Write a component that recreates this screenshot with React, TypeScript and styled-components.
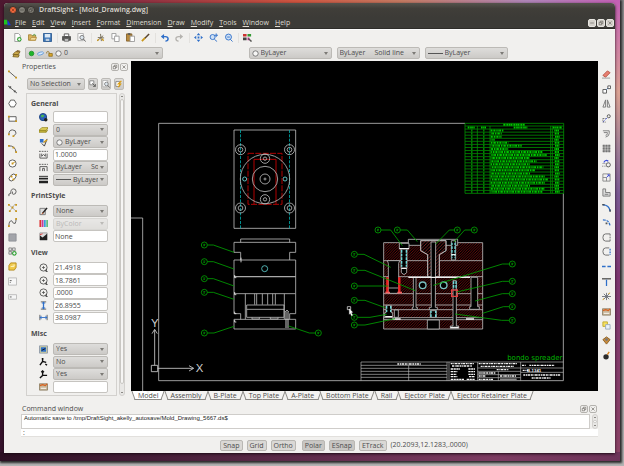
import React from "react";
import styled, { createGlobalStyle, css } from "styled-components";

const Global = createGlobalStyle`
  * { box-sizing: border-box; }
  body { margin: 0; background: #b9b9b9; }
  body, button, input, select, textarea {
    font-family: "Open Sans", "Noto Sans", sans-serif;
    font-size: 7px;
    line-height: 10px;
    color: #4c4c4c;
  }
  button, input, select, textarea { margin: 0; padding: 0; border: 0; background: none; outline: none; }
`;

/* ---------- window frame ---------- */

const Screen = styled.div`
  min-height: 100vh;
  display: flex;
  padding: 0 4px 5px 0;
  background: linear-gradient(#8a8a8a, #b4b4b4);
`;
const Desktop = styled.div`
  flex: 1;
  min-width: 0;
  display: flex;
  padding: 3px 5px 8px 4px;
  box-shadow: 1px 1px 2px 1px #2b2b2b;
  background:
    linear-gradient(90deg, #2d1024, #5a2a48 45%, #7d3c62 80%, #6d3359) 0 100% / 100% 9px no-repeat,
    linear-gradient(#c35fb4, #dba394 20%, #a18097 32%, #7b5a94 42%, #7d3670 60%, #8a4264) 100% 0 / 6px 100% no-repeat,
    linear-gradient(90deg, #4d1830, #8c2f42 22%, #cf5540 48%, #c27a62 65%, #ae85b8 85%, #c35fb4) 0 0 / 100% 8px no-repeat,
    linear-gradient(#4d1830, #59203d 45%, #34122b);
`;
const Frame = styled.div`
  flex: 1;
  min-width: 0;
  display: flex;
  flex-direction: column;
  background: #f1f0ee;
  border-radius: 4px 4px 0 0;
  box-shadow: 0 1px 3px #1a0a14;
  overflow: hidden;
`;
const TitleBar = styled.header`
  height: 14px;
  display: flex;
  align-items: center;
  padding: 0 5px;
  gap: 1px;
  background: linear-gradient(#55534d, #403e39 40%, #3c3b37);
`;
const WinDot = styled.button<{ $close?: boolean }>`
  width: 8px;
  height: 8px;
  display: flex;
  align-items: center;
  justify-content: center;
  border-radius: 50%;
  border: 1px solid #302f2b;
  color: ${(p) => (p.$close ? "#7a2a10" : "#45433e")};
  background: ${(p) => (p.$close ? "#f0683c" : "#85837b")};
  svg { width: 6px; height: 6px; }
`;
const Title = styled.h1`
  margin: 0 0 0 3px;
  font-size: 7px;
  line-height: 12px;
  font-weight: 600;
  color: #dfdbd2;
`;
const MenuBar = styled.nav`
  height: 12px;
  display: flex;
  align-items: center;
  padding: 0 1px 0 0;
  background: #3c3b37;
  border-bottom: 1px solid #2e2d2a;
`;
const MenuItem = styled.button`
  margin-left: 2px;
  padding: 0 2px;
  color: #dfdbd2;
  &::first-letter { text-decoration: underline; }
`;
const Spacer = styled.span`
  flex: 1;
`;
const SmallButton = styled.button<{ $light?: boolean }>`
  width: 8px;
  height: 8px;
  display: flex;
  margin-left: 1px;
  border-radius: 2px;
  border: 1px solid ${(p) => (p.$light ? "#e8e6e1" : "#b4b2ae")};
  background: ${(p) => (p.$light ? "#d3d0ca" : "#f1f0ee")};
  color: #5f5d58;
  svg { width: 6px; height: 6px; }
`;

/* ---------- toolbars ---------- */

const ToolBar = styled.div`
  height: 16px;
  display: flex;
  align-items: center;
  padding-left: 6px;
  border-top: 1px solid #fbfbfa;
`;
const Tool = styled.button`
  width: 15px;
  height: 14px;
  display: flex;
  align-items: center;
  justify-content: center;
  svg { width: 9px; height: 9px; }
`;
const Divider = styled.span`
  width: 1px;
  height: 10px;
  margin: 0 1px 0 2px;
  background: #e3e1de;
`;
const LayerBar = styled.div`
  height: 16px;
  display: flex;
  align-items: center;
  padding: 0 27px 0 5px;
  gap: 5px;
`;
const LayerTool = styled(Tool)`
  margin-right: -4px;
`;
const comboLook = css`
  border: 1px solid #bcbab6;
  border-radius: 2px;
  background: linear-gradient(#dedddb, #cccac7);
`;
const ComboBox = styled.span<{ $w?: number; $off?: boolean }>`
  ${comboLook}
  height: 12px;
  display: flex;
  align-items: center;
  gap: 2px;
  padding: 0 3px 0 2px;
  ${(p) => (p.$w ? `flex: 0 1 ${p.$w}px;` : "flex: 1;")}
  min-width: 0;
  opacity: ${(p) => (p.$off ? 0.45 : 1)};
  svg { width: 7px; height: 7px; flex: none; }
`;
const Select = styled.select`
  appearance: none;
  flex: 1;
  min-width: 0;
  height: 10px;
  overflow: hidden;
  white-space: pre;
`;
const Arrow = styled.i`
  flex: none;
  border: 2px solid transparent;
  border-top: 3px solid #7c7a76;
  border-bottom: 0;
`;

/* ---------- body ---------- */

const Main = styled.div`
  flex: 1;
  display: grid;
  grid-template-columns: 17px minmax(0, 1fr) 17px;
`;
const ToolColumn = styled.div`
  display: grid;
  grid-template-rows: repeat(25, 1fr);
  justify-items: center;
  padding-top: 6px;
  svg { width: 9px; height: 9px; }
`;
const ColumnTool = styled.button`
  display: flex;
  align-items: center;
`;
const Center = styled.div`
  display: flex;
  flex-direction: column;
  min-width: 0;
`;
const Work = styled.div`
  flex: 1;
  display: flex;
`;
const Properties = styled.section`
  width: 110px;
  flex: none;
  display: flex;
  flex-direction: column;
  padding: 0 3px 5px 1px;
`;
const PaneHead = styled.div`
  height: 12px;
  display: flex;
  align-items: center;
`;
const PaneTitle = styled.h2`
  margin: 0;
  font-size: 7px;
  line-height: 10px;
  font-weight: 400;
`;
const SelectionRow = styled.div`
  display: flex;
  gap: 3px;
  margin: 5px 4px 3px 5px;
`;
const SquareButton = styled.button`
  ${comboLook}
  width: 10px;
  height: 12px;
  display: flex;
  align-items: center;
  justify-content: center;
  svg { width: 8px; height: 8px; }
`;
const ListArea = styled.div`
  flex: 1;
  display: flex;
  gap: 2px;
  margin: 0 3px 0 4px;
`;
const PropertyList = styled.div`
  flex: 1;
  min-width: 0;
  display: flex;
  flex-direction: column;
  padding: 0 8px 2px 4px;
  border: 1px solid #d3d1ce;
`;
const GroupTitle = styled.h3`
  height: 19px;
  margin: 0;
  font-size: 7px;
  line-height: 20px;
  font-weight: 700;
  &:first-child { height: 17px; }
`;
const PropertyRow = styled.label`
  flex: 1;
  min-height: 12px;
  display: flex;
  align-items: center;
  padding-left: 8px;
  > svg { width: 9px; height: 9px; flex: none; margin-right: 5px; }
`;
const Field = styled.input`
  flex: 1;
  min-width: 0;
  height: 12px;
  padding: 0 1px;
  border: 1px solid #c6c4c0;
  border-radius: 2px;
  background: #fff;
`;
const ScrollBar = styled.div`
  width: 6px;
  display: flex;
  flex-direction: column;
  border: 1px solid #d3d1ce;
  border-radius: 3px;
  background: #e8e7e5;
`;
const ScrollEnd = styled.span`
  height: 5px;
  flex: none;
  display: flex;
  align-items: center;
  justify-content: center;
  &::before { content: ""; width: 2px; height: 1px; background: #8a8884; }
`;
const Thumb = styled.span<{ $gap: number }>`
  flex: 1;
  margin-bottom: ${(p) => p.$gap}px;
  border: 1px solid #c9c7c3;
  border-radius: 3px;
  background: #f6f5f4;
`;
const DrawingPane = styled.section`
  flex: 1;
  min-width: 0;
  display: flex;
  flex-direction: column;
`;
const Canvas = styled.svg`
  display: block;
  flex: 1 1 0;
  min-height: 0;
  width: 100%;
  background: #000;
`;
const Tabs = styled.div`
  display: flex;
  height: 10px;
  padding-left: 1px;
`;
const Tab = styled.button<{ $active?: boolean }>`
  position: relative;
  height: 9px;
  padding: 0 6px;
  line-height: 9px;
  white-space: nowrap;
  z-index: 0;
  &::before, &::after {
    content: "";
    position: absolute;
    z-index: -1;
    top: 0;
    bottom: 0;
    border-bottom: 1px solid #8b8985;
    background: ${(p) => (p.$active ? "#fff" : "#f4f3f1")};
  }
  &::before { left: 1px; right: 50%; border-left: 1px solid #8b8985; transform: skewX(20deg); }
  &::after { left: 50%; right: 1px; border-right: 1px solid #8b8985; transform: skewX(-20deg); }
`;
const Command = styled.section`
  display: flex;
  flex-direction: column;
  padding-top: 1px;
`;
const CommandHead = styled(PaneHead)`
  padding: 2px 1px 0;
`;
const LogRow = styled.div`
  display: flex;
  gap: 2px;
  height: 15px;
`;
const Log = styled.textarea`
  flex: 1;
  resize: none;
  overflow: hidden;
  padding: 0 2px;
  border: 1px solid #cfcdca;
  background: #fff;
  color: #222;
  font-family: "Liberation Sans", sans-serif;
  font-size: 6px;
  line-height: 7px;
`;
const Prompt = styled.input`
  height: 8px;
  padding: 0 2px;
  line-height: 7px;
  background: #fff;
  border-bottom: 1px solid #e2e0dd;
`;
const StatusBar = styled.footer`
  height: 16px;
  display: flex;
  align-items: center;
  justify-content: center;
  gap: 4px;
  padding-left: 69px;
`;
const Toggle = styled.button<{ $on?: boolean; $gap?: boolean }>`
  height: 11px;
  padding: 0 2px;
  border: 1px solid #b9b7b3;
  border-radius: 2px;
  background: ${(p) => (p.$on ? "#c8c6c3" : "#dad8d5")};
  line-height: 9px;
  margin-left: ${(p) => (p.$gap ? 2 : 0)}px;
`;

/* ---------- icons ---------- */

const K = "#555553";
const B = "#2f6fc9";
const Y = "#c9971c";

const art: Record<string, React.ReactNode> = {
  close: <path d="M2.5 2.5l5 5M7.5 2.5l-5 5" />,
  min: <path d="M2 5h6" />,
  restore: <path d="M2 4h4v4H2zM4 4V2h4v4H6" />,
  fresh: <><path d="M2 .5h4l2 2v7H2z" fill="#fff" stroke="#999" /><circle cx="7" cy="7" r="2.5" fill="#3aa63a" stroke="none" /><path d="M7 5.5v3M5.5 7h3" stroke="#fff" /></>,
  open: <><path d="M.5 8V2h3l1 1h4v5z" fill="#d9b25c" stroke="#a8843a" /><path d="M2 8l1.5-3h6L8 8z" fill="#f2dc9c" stroke="#b8944a" /><path d="M5 3q2-3 4 0" stroke="#4a9a3a" /></>,
  save: <><path d="M.5.5h9v9h-9z" fill="#3c76b8" stroke="#2b5a92" /><path d="M2 1h6v4H2z" fill="#dbe8f5" stroke="none" /><path d="M3 6.5h4V9H3z" fill="#bcd" stroke="none" /></>,
  print: <><path d="M2.5 1h5v3h-5z" fill="#fff" /><path d="M.5 4h9v4h-9z" fill={K} /><path d="M2.5 6.5h5V9h-5z" fill="#eee" /></>,
  preview: <><path d="M1 .5h6v8H1z" fill="#fff" stroke="#aaa" /><circle cx="5.5" cy="5" r="2.3" fill="#dce6ee" stroke="#777" /><path d="M7.3 6.8L9.5 9.5" /></>,
  cut: <><path d="M1.5 8.5L8 3M5 1l1 8M2 5l7 .5" stroke="#6f6650" /><path d="M6.5 6.5l2 2M3 7L1.5 8.5" stroke={Y} strokeWidth="1.6" /></>,
  copy: <><path d="M1 .5h4.5v6H1z" fill="#fff" stroke="#999" /><path d="M4 3.5h5v6H4z" fill="#fff" stroke="#999" /></>,
  paste: <><path d="M.5 1h6v8h-6z" fill="#b88a3c" stroke="#82602a" /><path d="M2.5.5h2v1.2h-2z" fill="#ccc" /><path d="M4.5 3.5h5v6h-5z" fill="#fff" stroke="#999" /></>,
  brush: <><path d="M9 1L4 6" stroke="#5a4630" strokeWidth="1.6" /><path d="M4.5 5.5L1 9" stroke={Y} strokeWidth="2" /></>,
  undo: <><path d="M2 4h4q3 0 3 2.5T6 9" stroke={B} strokeWidth="1.6" /><path d="M4.5 1L1 4l3.5 3z" fill={B} stroke="none" /></>,
  redo: <><path d="M8 4H4Q1 4 1 6.500T4 9" stroke="#b5b3af" strokeWidth="1.4" /><path d="M5.500 1L9 4 5.500 7z" fill="#b5b3af" stroke="none" /></>,
  pan: <path d="M5 0l2 2.500H3zM5 10l2-2.500H3zM0 5l2.500-2v4zM10 5L7.500 3v4zM4 4h2v2H4z" fill={B} stroke="none" />,
  zoomIn: <><circle cx="4" cy="4.500" r="2.800" fill="#cfe0f4" stroke={B} /><path d="M6 7l3 2.500M8 .5v4M6 2.500h4" stroke={B} /></>,
  zoomOut: <><circle cx="5" cy="4.500" r="3.300" fill="#cfe0f4" stroke={B} /><path d="M7 7l2.500 2.500M3.500 4.500h3" stroke={B} /></>,
  palette: <><path d="M0 1h4v3H0z" fill="#c33" stroke="none" /><path d="M5 1h4v3H5z" fill="#393" stroke="none" /><path d="M0 5h4v3H0z" fill="#444" stroke="none" /><path d="M5 5h2v3H5z" fill="#c39" stroke="none" /><path d="M6 6l3.500 3.500" strokeWidth="1.600" /></>,
  layers: <><path d="M1 6l3-3h5L7 6zM1 8.500L2 6.500h6L7 9z" fill="#d7b450" stroke="#7a6220" /><path d="M4 3l2-2 3 1-2 2z" fill="#8a6a34" stroke="none" /></>,
  bulb: <circle cx="5" cy="5" r="3.300" fill="#1fb52a" stroke="#128a1c" />,
  freeze: <ellipse cx="5" cy="5" rx="4.500" ry="2" fill="#d8e8fa" stroke="#4f8fd6" transform="rotate(-15 5 5)" />,
  lock: <><path d="M4 5h5v4H4z" fill="#d9a72c" stroke="#8b6914" /><path d="M1 5V3q1.500-2 3.500 0v2" stroke="#8b6914" /></>,
  ring: <circle cx="5" cy="5" r="3.800" fill="#f6f6f5" stroke="#555" />,
  line: <><path d="M1 1.500l8 7" /><path d="M0 .5h2v2H0zM8 7.500h2v2H8z" fill={Y} stroke="none" /></>,
  infinite: <><path d="M0 1l10 8" /><path d="M1.500 1.500h2v2h-2zM6.500 6h2v2h-2z" fill={K} stroke="none" /></>,
  hex: <path d="M3 1.200h4L9.200 5 7 8.800H3L.8 5z" fill="#fff" />,
  rect: <><path d="M1 3h8v5H1z" fill="#fff" /><path d="M0 2h2v2H0zM8 7h2v2H8z" fill={Y} stroke="none" /></>,
  polyarc: <><path d="M1 6Q1 1 5 1t4 4L6 8" /><path d="M0 5h2v2H0zM5 7h2v2H5z" fill={Y} stroke="none" /></>,
  arc: <><path d="M1 2q7 0 8 7" /><path d="M0 1h2v2H0zM5 3h2v2H5zM8 8h2v2H8z" fill={Y} stroke="none" /></>,
  circle: <><circle cx="5" cy="5" r="4" fill="#fff" /><path d="M5 5l3-2" stroke={Y} /><path d="M4 4h2v2H4z" fill={Y} stroke="none" /></>,
  ellipse: <><ellipse cx="5" cy="5" rx="4.500" ry="2.800" fill="#fff" transform="rotate(-45 5 5)" /><path d="M3 3h2v2H3zM5 6h2v2H5zM8 1h2v2H8z" fill={Y} stroke="none" /></>,
  cloud: <path d="M1 9q-1-3 2-3 0-5 3-5t3 3q0 3-3 3-2 0-1-3" />,
  points: <><path d="M1 2l8 7M8 1L2 9" stroke="#aaa" /><path d="M0 1h2v2H0zM8 1h2v2H8zM4 4h2v2H4zM1 8h2v2H1zM8 8h2v2H8z" fill={Y} stroke="none" /></>,
  spline: <><path d="M1 9q0-6 3-6 2 4 4 3 1-2 1-5" /><path d="M0 8h2v2H0zM8 0h2v2H8z" fill={Y} stroke="none" /></>,
  fill: <path d="M1 1h8v8H1z" fill="#a3a5aa" stroke="#8d8f94" />,
  block: <><path d="M1 1h3v3H1zM5 1h3v3H5zM1 5h3v3H1z" fill="#ddd" stroke="#888" /><circle cx="7" cy="7" r="2.600" fill="#36a23a" stroke="none" /><path d="M7 5.500v3M5.500 7h3" stroke="#fff" /></>,
  region: <><path d="M3 1h6v5l-2 3H1V4z" fill="#efc94a" stroke="#b58a18" /><path d="M3 5h4M5 3.500h3" stroke="#fff3c0" /></>,
  note: <><path d="M.5 1h9v8h-9z" fill="#f6f6f6" stroke="#b8b8b8" /><path d="M2 4h2M2 6h1" /></>,
  noteSmall: <><path d="M.5 3h9v5h-9z" fill="#f6f6f6" stroke="#b8b8b8" /><path d="M2 5.500h2" /></>,
  eraser: <><path d="M1 6l5-5 3 2-5 5z" fill="#e77f70" stroke="#b85548" /><path d="M0 9h9" stroke="#999" /></>,
  move: <><path d="M1 5h4v4H1z" fill="#fff" /><path d="M5 5l2-2" stroke={B} /><path d="M6.500 1h3v3h-3z" fill="#fff" /></>,
  mirror: <path d="M4 1L1 9h3zM6 1l3 8H6z" stroke="#777" />,
  scaleDots: <><path d="M1 9L6 4" stroke="#3a4bdc" strokeDasharray="1.500 1" /><path d="M1 5h3M1 5v4h4" strokeDasharray="1 1" /><circle cx="7.500" cy="2.500" r="1.700" /></>,
  offset: <path d="M1 2h7v3q0 3-4 4M2 4h4v1q0 2-2 2" stroke="#777" />,
  grid: <path d="M1 1h2v2H1zM4 1h2v2H4zM7 1h2v2H7zM1 4h2v2H1zM4 4h2v2H4zM7 4h2v2H7zM1 7h2v2H1zM4 7h2v2H4zM7 7h2v2H7z" fill="#777" stroke="#777" strokeWidth=".5" />,
  rotate: <><circle cx="7" cy="6.500" r="2.300" /><path d="M0 8h5V5H0" stroke="#888" strokeDasharray="1.500 1" /><path d="M2 4q2-4 5-1.500" stroke="#3a4bdc" strokeWidth="1.300" /></>,
  scale: <><path d="M1 1h8v8H1z" stroke="#888" /><path d="M1 5h4v4" stroke="#888" /><path d="M5 5l3-3M6 2h2v2" stroke="#3a4bdc" /></>,
  stretch: <path d="M1 1h3v4h5v4H1zM3 7h4" stroke="#777" fill="#ddd" />,
  fillet: <><path d="M1 2q7 0 8 7" stroke={B} strokeWidth="1.500" /><path d="M0 2h3M9 7v3" stroke="#222" /></>,
  arcEdit: <><path d="M1 2q7 0 8 7" stroke={B} strokeWidth="1.400" strokeDasharray="3 1" /><path d="M4 5h2v2H4z" fill={K} stroke="none" /></>,
  weld: <path d="M9 3V1H4Q1 1 1 5t3 4h5V7M9 4v2" stroke="#666" />,
  weldBlue: <><path d="M8 1H4Q1 1 1 5t3 4h4" stroke="#666" /><path d="M9 2v7" stroke={B} strokeDasharray="2 1" strokeWidth="1.400" /></>,
  split: <path d="M0 5h4M6 5h4" stroke={B} strokeWidth="1.800" />,
  trim: <><path d="M0 2h10" strokeWidth="1.500" /><path d="M5 3v7" stroke={B} strokeWidth="1.400" /></>,
  explode: <><path d="M5 1v8M2 2l6 6M8 2L2 8M0 5h10" stroke="#6b6f78" /><path d="M7 2l2-1M2 7l-1 2" stroke={Y} /></>,
  picture: <><path d="M.5 2h9v7h-9z" fill="#c9b79a" stroke="#8f8168" /><path d="M1 4l3-1 3 1 2-2" stroke="#d9601c" strokeWidth="1.300" /><path d="M2 7h6" stroke="#fff" /></>,
  order: <><path d="M1 1h5v5H1z" fill="#f6e060" stroke="#c0a82c" /><path d="M4 4h5v5H4z" fill="#e8f0fa" stroke="#9ab" /></>,
  purge: <><path d="M1 4l4-3 4 3-4 5z" fill="#c88b3c" stroke="#8b5c1c" /><circle cx="5" cy="4" r="1.500" fill="#777" stroke="none" /></>,
  bomb: <><circle cx="4.500" cy="6.500" r="3" fill="#2a2a2a" stroke="none" /><path d="M6 4l2-3" stroke="#d9801c" strokeWidth="1.500" /></>,
  globe: <><circle cx="4.500" cy="4.500" r="4" fill="#2c62b8" stroke="#1a4080" /><path d="M2 3q2-2 4 0-1 2-3 2z" fill="#4bb850" stroke="none" /><circle cx="7.500" cy="7.500" r="2" fill="#222" stroke="none" /></>,
  sheet: <><path d="M0 6l3-3h7L8 6z" fill="#e5d660" stroke="#9a8c24" /><path d="M0 6h8v2H0zM8 8l2-3" fill="#c9b93c" stroke="#9a8c24" /></>,
  style: <><path d="M1 1h4v4H1z" fill={B} stroke="none" /><path d="M3 6l3 3 3-8" stroke="#333" /><path d="M5 5l4-3" stroke={Y} strokeWidth="1.600" /></>,
  ltScale: <><path d="M0 1.500h10" strokeDasharray="2 1" /><path d="M1 4v5h8V4M3 4v3l2-2 2 2V4" /></>,
  ltype: <><path d="M0 1.500h10" strokeDasharray="2 1" /><path d="M1 9V4h8v5M4 9V6h2v3" /></>,
  weight: <g stroke="#222"><path d="M0 1.500h10" strokeWidth="1" /><path d="M0 4h10" strokeWidth="1.800" /><path d="M0 7.800h10" strokeWidth="3" /></g>,
  pencil: <><path d="M1 1.500h6v7H1z" fill="#ddd" stroke="#777" /><path d="M9 1L4 7" stroke="#222" strokeWidth="1.600" /><path d="M5 6L3 8" stroke="#d05018" /></>,
  bars: <><path d="M1.500 1v8" stroke="#d33" strokeWidth="2" /><path d="M4 1v8" stroke="#c83c9c" strokeWidth="2" /><path d="M6.500 1v8" stroke="#3aa0dc" strokeWidth="2" /><path d="M9 1v8" stroke="#3aae5c" strokeWidth="1.500" /></>,
  tone: <><path d="M1 1h8v8H1z" fill="#ddd" stroke="#999" /><path d="M1 9V4l3 2 5-4v7z" fill="#222" stroke="none" /><path d="M1 3l3-1" stroke="#d33" /></>,
  target: <><circle cx="5" cy="5" r="4" /><path d="M5 3.500v3M3.500 5h3" /><path d="M8 7v3h2" stroke="#222" /></>,
  tall: <><path d="M2 1h6M2 9h6" /><path d="M5 1v8" stroke={B} strokeWidth="1.400" /><path d="M3.500 3L5 1l1.500 2M3.500 7L5 9l1.500-2" stroke={B} /></>,
  wide: <><path d="M1 2v6M9 2v6" /><path d="M1 5h8M3 3.500L1 5l2 1.500M7 3.500L9 5 7 6.500" stroke={B} /></>,
  vp: <><path d="M.5 1h9v8h-9z" fill="#dcd9a0" stroke="#8a95a8" /><path d="M2 2.500h6v5H2z" fill={B} stroke="none" /><path d="M3 6l4-2" stroke="#111" /></>,
  ucs: <path d="M4 1v4l4 1M4 5L1 9M3 2h2M7 8l2 1" stroke="#111" strokeWidth="1.500" />,
  ucsBig: <path d="M4 1v5h5M4 6L1 9M2.500 2.500L4 1l1.500 1.500" stroke="#111" strokeWidth="1.500" />,
  bolt: <><path d="M1 2h5v6H1z" fill="#fff" stroke="#777" /><path d="M8 1L4 5h3L4 9" stroke="#e0a010" strokeWidth="1.500" /></>,
  pick: <><path d="M1 1h5v5H1z" fill="#fff" stroke="#777" /><path d="M4 4l4 4M8 5v3H5" /></>,
};

const inherits = ["close", "min", "restore"];

const Icon = ({ n }: { n: string }) => (
  <svg viewBox="0 0 10 10" fill="none" stroke={inherits.includes(n) ? "currentColor" : K} aria-hidden="true">
    {art[n]}
  </svg>
);

const LineSample = styled.i`
  flex: none;
  width: 15px;
  height: 1px;
  background: #555;
`;

type ComboProps = { label: string; value: string; icons?: string[]; w?: number; off?: boolean; sample?: boolean };
const Combo = ({ label, value, icons = [], w, off, sample }: ComboProps) => (
  <ComboBox $w={w} $off={off}>
    {icons.map((n) => <Icon key={n} n={n} />)}
    {sample && <LineSample />}
    <Select aria-label={label} disabled={off} defaultValue={value}>
      <option>{value}</option>
    </Select>
    <Arrow />
  </ComboBox>
);

/* ---------- drawing (three units per pixel) ---------- */

const WHITE = "#b9b9b9";
const GREEN = "#00a000";

const Balloon = ({ p }: { p: number[][] }) => (
  <g stroke={GREEN}>
    <circle cx={p[0][0]} cy={p[0][1]} r="9" />
    <path d={`M${p[0][0] - 3} ${p[0][1] - 2}h6m-6 4h5`} />
    <path d={"M" + p.map((q, i) => (i === 0 ? [q[0] + (p[1][0] > q[0] ? 9 : -9), q[1]] : q).join(" ")).join("L")} />
  </g>
);

const partLengths = [38, 33, 33, 13, 53, 93, 53, 155, 168, 118, 138, 118, 158, 133, 118, 163, 173, 163, 118, 163, 155];

const PlanView = () => (
  <g transform="translate(405 345)">
    <path d="M297 45H482V340H297z" />
    <g stroke="#00a8a8">
      <path d="M316.500 45V340M463.500 45V340" strokeDasharray="9 4" />
      <circle cx="329" cy="192" r="6" stroke="#6fe0e0" />
      <circle cx="450" cy="192" r="6" stroke="#6fe0e0" />
    </g>
    <g stroke="#b00000" strokeWidth="3">
      <path d="M339 115H441V268H339z" strokeDasharray="18 4" />
      <path d="M357 268V133H423V268" />
    </g>
    {[[316.5, 104], [463.5, 104], [316.5, 279], [463.5, 279]].map(([x, y]) => (
      <g key={`${x}-${y}`}><circle cx={x} cy={y} r="15" /><circle cx={x} cy={y} r="7" /></g>
    ))}
    {[74, 38, 15, 3].map((r) => <circle key={r} cx="390" cy="192" r={r} />)}
    {[131, 253].map((y) => (
      <g key={y}><circle cx="390" cy={y} r="14" /><circle cx="390" cy={y} r="5" /></g>
    ))}
  </g>
);

const FrontView = () => (
  <g transform="translate(390 660)">
    <path d="M332 67V57H479V67M312 67H497V97H479V120M312 67V97H332V120M312 120H497V170H312zM312 170H497V221H312zM312 221V281H332V298M497 221V281H479V298M312 298H497V327H312z" />
    <path d="M346 221V298M463 221V298M374 221V254M380 221V254M397 221V254M413 221V254M428 221V254M436 221V254M350 255H462V292H350zM350 268H462M366 292V297H388V292M421 292V297H444V292" />
    <path d="M468 275V324M474 275V324M466 275q5-8 10 0M333 113v14M314 165v8h5M314 216v8h5M314 275v6h5M314 300v6h5" stroke="#eee" />
    <circle cx="404" cy="146" r="9" stroke="#5fd0d0" />
    <Balloon p={[[223, 75], [250, 75], [312, 97]]} />
    <Balloon p={[[223, 125], [250, 125], [312, 147]]} />
    <Balloon p={[[223, 176], [250, 176], [312, 198]]} />
    <Balloon p={[[223, 217], [250, 217], [312, 238]]} />
    <Balloon p={[[223, 339], [252, 339], [312, 319]]} />
    <Balloon p={[[565, 339], [538, 339], [476, 318]]} />
    <path d="M64 436H83V455H64zM74 436V330M66 341L74 328L82 341M83 445H190M177 437L191 445L177 453" stroke="#d0d0d0" />
  </g>
);

const SectionView = () => (
  <g transform="translate(1020 660)">
    <path d="M131 68H428V327H131z" fill="url(#hatch)" />
    <path d="M131 122H428M131 170H428M131 221H428M131 255H428M131 269H428" />
    <path d="M131 293H428V299H131z" fill="#000" />
    <g fill="#000">
      <path d="M205 58H353V76H205z" />
      <path d="M242 62H318V92L298 104V170H263V104L242 92z" fill="#000" />
      <path d="M242 62H318V92L298 104V170H263V104L242 92z" fill="url(#hatchBack)" />
      <path d="M273 66H287L286 262H292V269H268V262H274z" />
      <path d="M178 70H207V86H178zM183 86H201V145H183zM184 145H200V158L192 164L184 158z" />
      <path d="M334 62H347V120H334z" />
      <path d="M142 122H179L176 130V220H145V130z" />
      <path d="M145 204H176" />
      <path d="M220 172H228V262H232V268H217V262H220z" />
      <path d="M393 172H413V260H418V268H389V260H393z" />
      <path d="M339 182H349V318H356V325H331V318H339z" />
      <path d="M262 300H298V327H262z" />
      <path d="M138 256H154V278H158V290H134V278H138zM163 270H175V292H163z" />
      <path d="M271 272H289V292H271z" />
    </g>
    <path d="M142 172V216M178 172V216" stroke="#f02020" strokeWidth="7" />
    <path d="M136 218H150M172 218H186" stroke="#f06060" strokeWidth="5" />
    <path d="M335 210H352V229H335z" stroke="#e04040" strokeWidth="4" />
    <path d="M185 90V140M199 90V140M336 68V115M345 68V115M341 184V208M348 184V208M273 272V292M287 272V292M140 258V276M152 258V276" stroke="#6fdada" strokeDasharray="8 3" strokeWidth="4" />
    <path d="M334 104H347M178 86H207M184 145H200M157 297H182M378 297H402M136 290H157M205 172H390M331 322H356" stroke="#f0f0f0" strokeWidth="4" />
    <circle cx="248" cy="196" r="10" fill="#000" stroke="#7ac0c0" strokeWidth="4" />
    <circle cx="311" cy="196" r="10" fill="#000" stroke="#7ac0c0" strokeWidth="4" />
    <Balloon p={[[114, 30], [152, 30], [187, 77]]} />
    <Balloon p={[[172, 30], [202, 30], [232, 65]]} />
    <Balloon p={[[352, 30], [328, 30], [287, 72]]} />
    <Balloon p={[[403, 30], [374, 30], [342, 66]]} />
    <Balloon p={[[43, 103], [72, 103], [152, 142]]} />
    <Balloon p={[[43, 151], [75, 151], [226, 212]]} />
    <Balloon p={[[43, 198], [75, 198], [145, 198]]} />
    <Balloon p={[[43, 241], [75, 241], [135, 263]]} />
    <Balloon p={[[43, 292], [90, 292], [140, 283]]} />
    <Balloon p={[[43, 315], [75, 315], [165, 296]]} />
    <Balloon p={[[517, 132], [487, 132], [280, 196]]} />
    <Balloon p={[[517, 184], [487, 184], [350, 216]]} />
    <Balloon p={[[517, 221], [487, 221], [405, 243]]} />
    <Balloon p={[[517, 260], [490, 260], [428, 280]]} />
    <Balloon p={[[517, 301], [485, 301], [345, 282]]} />
    <path d="M22 260H32V269H22z" stroke="#ccc" />
    <path d="M28 266L38 277L34 278L38 286L34 287L31 280L28 283z" fill="#fff" stroke="#fff" strokeWidth="1" />
  </g>
);

const PartsTable = () => (
  <g transform="translate(1365 330)" stroke="#008a00">
    <path d="M30 40H326V250H30zM67 48V250M105 48V250M287 48V250M292 48V250" />
    {Array.from({ length: 22 }, (_, i) => <path key={i} d={`M30 ${48 + i * 9.2}H326`} />)}
    <g stroke="#00c400" strokeWidth="6">
      {partLengths.map((w, i) => (
        <path key={i} d={`M107 ${61.500 + i * 9.2}h${w}`} strokeDasharray="4 1.500 2 1 6 2.500" strokeDashoffset={i * 4} />
      ))}
      {partLengths.map((w, i) => (
        <path key={i} d={`M${298 + (i % 3)} ${61.500 + i * 9.2}h${15 - (i % 2) * 2}M49 ${61.500 + i * 9.2}h3M85 ${61.500 + i * 9.2}h3`} strokeDasharray="4 1" />
      ))}
      <path d="M145 44h65M176 52.500h42M38 52.500h22M78 52.500h15M294 52.500h26" strokeDasharray="5 1.500 3 1" />
    </g>
  </g>
);

const TitleBlock = () => (
  <g transform="translate(1050 1020)">
    <path d="M33 66H640M33 76H291M33 85H291M33 94H291M33 103H291M33 112H291M33 66V122M176 76V122M291 66V122M297 66V122M383 66V122M512 66V122" strokeWidth="2" />
    <path d="M383 84H512M383 94H512M383 104H512M383 113H512M445 94V122M512 84H640M512 97H640" strokeWidth="2" />
    <g stroke="#f4f4f4" strokeWidth="4">
      <path d="M142 72h70M302 71h70M306 78h60M386 71h115M392 79h100M440 89h36M386 99h50M450 108h48M386 108h20M386 118h44M516 76h12M538 76h76M518 91h16M520 105h112M545 114h58" strokeDasharray="6 2 3 1.500 8 2" />
      <path d="M302 87h28M302 95h20M302 103h18M302 110h20M302 118h40M355 87h20M355 95h20M355 103h20M357 110h18M350 118h24" strokeDasharray="7 1.500" />
      <path d="M385 99h18M450 118h50" stroke="#888" strokeWidth="5" />
    </g>
  </g>
);

const Drawing = () => (
  <Canvas viewBox="393 183 1401 990" preserveAspectRatio="xMinYMin meet" fill="none" stroke={WHITE} strokeWidth="2.500" role="img" aria-label="Mold drawing">
    <defs>
      <pattern id="hatch" width="8" height="8" patternUnits="userSpaceOnUse">
        <path d="M-1 9L9 -1M-1 1L1 -1M7 9L9 7" stroke="#861010" strokeWidth="2.200" />
      </pattern>
      <pattern id="hatchBack" width="10" height="10" patternUnits="userSpaceOnUse">
        <path d="M-1 11L11 -1M-1 1L1 -1M9 11L11 9" stroke="#b03030" strokeWidth="2" />
      </pattern>
    </defs>
    <path d="M393 654H428V1173" />
    <path d="M1395 370H476V1142H1690V580" />
    <PlanView />
    <FrontView />
    <SectionView />
    <PartsTable />
    <TitleBlock />
    <g stroke="none" fill="#d0d0d0" fontFamily="Liberation Sans, sans-serif" fontSize="34">
      <text x="453" y="981">Y</text>
      <text x="587" y="1117">X</text>
    </g>
    <text x="1687" y="1080" textAnchor="end" stroke="none" fill="#00b400" fontFamily="DejaVu Sans, sans-serif" fontSize="21">bondo spreader</text>
    <text x="1581" y="1115" stroke="none" fill="#fff" fontFamily="Liberation Sans, sans-serif" fontWeight="700" fontSize="13">B-1341</text>
  </Canvas>
);

/* ---------- data ---------- */

const menus = ["File", "Edit", "View", "Insert", "Format", "Dimension", "Draw", "Modify", "Tools", "Window", "Help"];
const toolGroups = [
  ["fresh", "open", "save"],
  ["print", "preview"],
  ["cut", "copy", "paste", "brush"],
  ["undo", "redo"],
  ["pan", "zoomIn", "zoomOut"],
  ["palette"],
];
const drawTools = ["line", "infinite", "hex", "rect", "polyarc", "arc", "circle", "ellipse", "cloud", "points", "spline", "fill", "block", "region", "note", "noteSmall"];
const modifyTools = ["eraser", "move", "mirror", "scaleDots", "offset", "grid", "rotate", "scale", "stretch", "fillet", "arcEdit", "weld", "weldBlue", "split", "trim", "explode", "picture", "order", "purge", "bomb"];

type Prop = { icon: string; label: string; value: string; combo?: boolean; ring?: boolean; sample?: boolean; off?: boolean };
const groups: { title: string; rows: Prop[] }[] = [
  {
    title: "General",
    rows: [
      { icon: "globe", label: "Hyperlink", value: "" },
      { icon: "sheet", label: "Layer", value: "0", combo: true },
      { icon: "style", label: "Line color", value: "ByLayer", combo: true, ring: true },
      { icon: "ltScale", label: "Line scale", value: "1.0000" },
      { icon: "ltype", label: "Line style", value: "ByLayer\u00a0\u00a0\u00a0\u00a0\u00a0Solid line", combo: true },
      { icon: "weight", label: "Line weight", value: "ByLayer", combo: true, sample: true },
    ],
  },
  {
    title: "PrintStyle",
    rows: [
      { icon: "pencil", label: "Print style", value: "None", combo: true },
      { icon: "bars", label: "Print color", value: "ByColor", combo: true, off: true },
      { icon: "tone", label: "Print table", value: "None" },
    ],
  },
  {
    title: "View",
    rows: [
      { icon: "target", label: "Center X", value: "21.4918" },
      { icon: "target", label: "Center Y", value: "18.7861" },
      { icon: "target", label: "Center Z", value: ".0000" },
      { icon: "tall", label: "Height", value: "26.8955" },
      { icon: "wide", label: "Width", value: "38.0987" },
    ],
  },
  {
    title: "Misc",
    rows: [
      { icon: "vp", label: "Annotation", value: "Yes", combo: true },
      { icon: "ucs", label: "Icon at origin", value: "No", combo: true },
      { icon: "ucsBig", label: "Icon on", value: "Yes", combo: true },
      { icon: "picture", label: "CCS name", value: "" },
    ],
  },
];
const sheets = ["Model", "Assembly", "B-Plate", "Top Plate", "A-Plate", "Bottom Plate", "Rail", "Ejector Plate", "Ejector Retainer Plate"];

export default function App() {
  return (
    <Screen>
      <Global />
      <Desktop>
        <Frame>
          <TitleBar>
            <WinDot $close aria-label="Close"><Icon n="close" /></WinDot>
            <WinDot aria-label="Minimize"><Icon n="min" /></WinDot>
            <WinDot aria-label="Maximize"><Icon n="restore" /></WinDot>
            <Title>DraftSight - [Mold_Drawing.dwg]</Title>
          </TitleBar>
          <MenuBar>
            <svg width="7" height="7" viewBox="0 0 10 10" aria-hidden="true">
              <path d="M0 1h4l2 7H0z" fill="#1fc41f" />
              <path d="M5 1l5 8H5z" fill="#1c36d8" />
            </svg>
            {menus.map((m) => <MenuItem key={m}>{m}</MenuItem>)}
            <Spacer />
            <SmallButton $light aria-label="Minimize drawing"><Icon n="min" /></SmallButton>
            <SmallButton $light aria-label="Restore drawing"><Icon n="restore" /></SmallButton>
            <SmallButton $light aria-label="Close drawing"><Icon n="close" /></SmallButton>
          </MenuBar>
          <ToolBar>
            {toolGroups.map((g, i) => (
              <React.Fragment key={i}>
                {i > 0 && <Divider />}
                {g.map((n) => <Tool key={n} aria-label={n}><Icon n={n} /></Tool>)}
              </React.Fragment>
            ))}
          </ToolBar>
          <LayerBar>
            <LayerTool aria-label="Layers"><Icon n="layers" /></LayerTool>
            <Combo label="Layer" value="0" w={138} icons={["bulb", "freeze", "lock", "ring"]} />
            <Spacer />
            <Combo label="Line color" value="ByLayer" w={83} icons={["ring"]} />
            <Combo label="Line style" value={"ByLayer\u00a0\u00a0\u00a0\u00a0\u00a0Solid line"} w={83} />
            <Combo label="Line weight" value="ByLayer" w={83} sample />
            <Spacer />
          </LayerBar>
          <Main>
            <ToolColumn>
              {drawTools.map((n) => <ColumnTool key={n} aria-label={n}><Icon n={n} /></ColumnTool>)}
            </ToolColumn>
            <Center>
              <Work>
                <Properties>
                  <PaneHead>
                    <PaneTitle>Properties</PaneTitle>
                    <Spacer />
                    <SmallButton aria-label="Float properties"><Icon n="restore" /></SmallButton>
                    <SmallButton aria-label="Close properties"><Icon n="close" /></SmallButton>
                  </PaneHead>
                  <SelectionRow>
                    <Combo label="Selection" value="No Selection" />
                    <SquareButton aria-label="Select"><Icon n="pick" /></SquareButton>
                    <SquareButton aria-label="Smart select"><Icon n="preview" /></SquareButton>
                    <SquareButton aria-label="Quick select"><Icon n="bolt" /></SquareButton>
                  </SelectionRow>
                  <ListArea>
                    <PropertyList>
                      {groups.map((g) => (
                        <React.Fragment key={g.title}>
                          <GroupTitle>{g.title}</GroupTitle>
                          {g.rows.map((r) => (
                            <PropertyRow key={r.label}>
                              <Icon n={r.icon} />
                              {r.combo ? (
                                <Combo label={r.label} value={r.value} off={r.off} sample={r.sample} icons={r.ring ? ["ring"] : []} />
                              ) : (
                                <Field aria-label={r.label} defaultValue={r.value} />
                              )}
                            </PropertyRow>
                          ))}
                        </React.Fragment>
                      ))}
                    </PropertyList>
                    <ScrollBar><ScrollEnd /><Thumb $gap={6} /><ScrollEnd /></ScrollBar>
                  </ListArea>
                </Properties>
                <DrawingPane>
                  <Drawing />
                  <Tabs>
                    {sheets.map((s, i) => <Tab key={s} $active={i === 0}>{s}</Tab>)}
                  </Tabs>
                </DrawingPane>
              </Work>
              <Command>
                <CommandHead>
                  <PaneTitle>Command window</PaneTitle>
                  <Spacer />
                  <SmallButton aria-label="Float command window"><Icon n="restore" /></SmallButton>
                  <SmallButton aria-label="Close command window"><Icon n="close" /></SmallButton>
                </CommandHead>
                <LogRow>
                  <Log readOnly aria-label="Command history" value="Automatic save to /tmp/DraftSight_akelly_autosave/Mold_Drawing_5667.ds$" />
                  <ScrollBar><ScrollEnd /><Thumb $gap={0} /><ScrollEnd /></ScrollBar>
                </LogRow>
                <Prompt aria-label="Command" defaultValue=":" />
              </Command>
            </Center>
            <ToolColumn>
              {modifyTools.map((n) => <ColumnTool key={n} aria-label={n}><Icon n={n} /></ColumnTool>)}
            </ToolColumn>
          </Main>
          <StatusBar>
            <Toggle>Snap</Toggle>
            <Toggle>Grid</Toggle>
            <Toggle>Ortho</Toggle>
            <Toggle $on $gap>Polar</Toggle>
            <Toggle $on>ESnap</Toggle>
            <Toggle>ETrack</Toggle>
            <span>(20.2093,12.1283,.0000)</span>
          </StatusBar>
        </Frame>
      </Desktop>
    </Screen>
  );
}
